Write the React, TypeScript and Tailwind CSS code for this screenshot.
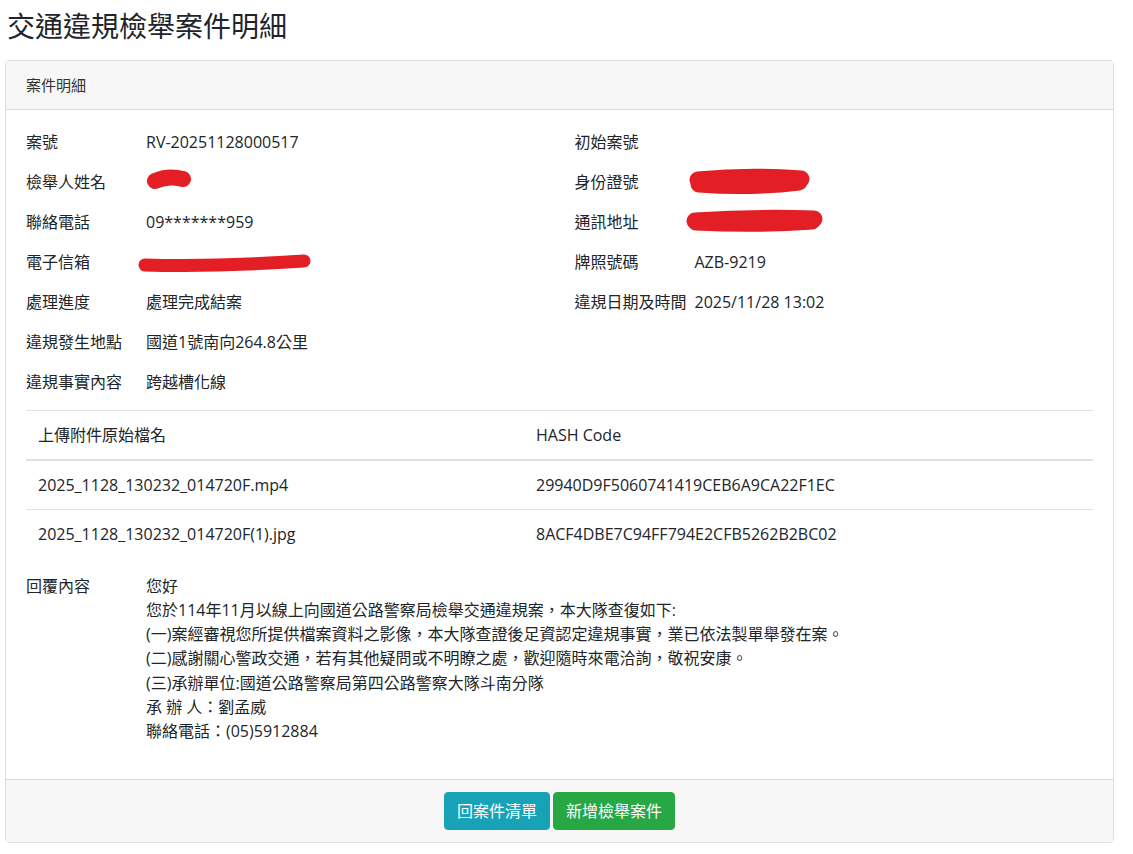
import React from 'react';

type Field = { label: string; value?: React.ReactNode };

const font = { fontFamily: '"Open Sans", "Noto Sans CJK TC", sans-serif' };

function Redact({ w, h, d, sw, className = '' }: { w: number; h: number; d: string; sw: number; className?: string }) {
  return (
    <svg width={w} height={h} viewBox={`0 0 ${w} ${h}`} className={`block ${className}`}>
      <path d={d} fill="none" stroke="#e31e24" strokeWidth={sw} strokeLinecap="round" strokeLinejoin="round" />
    </svg>
  );
}

const leftFields: Field[] = [
  { label: '案號', value: 'RV-20251128000517' },
  {
    label: '檢舉人姓名',
    value: <Redact w={46} h={22} sw={16} d="M9 12 Q22 6 37 10" className="-mt-[3px]" />,
  },
  { label: '聯絡電話', value: '09*******959' },
  {
    label: '電子信箱',
    value: <Redact w={174} h={20} sw={13} d="M7 12 Q80 14 166 8" className="-ml-[8px] mt-[2px]" />,
  },
  { label: '處理進度', value: '處理完成結案' },
  { label: '違規發生地點', value: '國道1號南向264.8公里' },
  { label: '違規事實內容', value: '跨越槽化線' },
];

const rightFields: Field[] = [
  { label: '初始案號' },
  {
    label: '身份證號',
    value: <Redact w={122} h={28} sw={17} d="M9 13 Q60 8 112 12 M10 17 Q60 21 110 15" className="-ml-[6px] -mt-[2px]" />,
  },
  {
    label: '通訊地址',
    value: <Redact w={138} h={24} sw={17} d="M9 13 Q70 9 128 11 M10 14 Q70 17 126 13" className="-ml-[9px] -mt-[4px]" />,
  },
  { label: '牌照號碼', value: 'AZB-9219' },
  { label: '違規日期及時間', value: '2025/11/28 13:02' },
];

const files = [
  { name: '2025_1128_130232_014720F.mp4', hash: '29940D9F5060741419CEB6A9CA22F1EC' },
  { name: '2025_1128_130232_014720F(1).jpg', hash: '8ACF4DBE7C94FF794E2CFB5262B2BC02' },
];

const reply = [
  '您好',
  '您於114年11月以線上向國道公路警察局檢舉交通違規案，本大隊查復如下:',
  '(一)案經審視您所提供檔案資料之影像，本大隊查證後足資認定違規事實，業已依法製單舉發在案。',
  '(二)感謝關心警政交通，若有其他疑問或不明瞭之處，歡迎隨時來電洽詢，敬祝安康。',
  '(三)承辦單位:國道公路警察局第四公路警察大隊斗南分隊',
  '承 辦 人：劉孟威',
  '聯絡電話：(05)5912884',
];

function FieldRow({ f }: { f: Field }) {
  return (
    <div className="flex items-center h-6 mb-4">
      <div className="w-[120px] shrink-0">{f.label}</div>
      <div>{f.value}</div>
    </div>
  );
}

export default function App() {
  return (
    <div className="min-h-screen bg-white text-[#212529] text-base leading-6 pl-[5px] pr-[19px]" style={font}>
      <h3 className="text-[28px] leading-[1.2] pt-[10px] mb-4 pl-[2px] font-normal">交通違規檢舉案件明細</h3>

      <div className="border border-black/[.125] rounded">
        {/* Header */}
        <div className="bg-[#f7f7f7] border-b border-black/[.125] px-5 py-3 text-[15px] text-[#333]">案件明細</div>

        {/* Body */}
        <div className="px-5 pt-5 pb-[19px]">
          <div className="grid grid-cols-2 gap-x-[30px]">
            <div>
              {leftFields.map((f) => (
                <FieldRow key={f.label} f={f} />
              ))}
            </div>
            <div>
              {rightFields.map((f) => (
                <FieldRow key={f.label} f={f} />
              ))}
            </div>
          </div>

          <table className="w-full mb-4 border-collapse">
            <thead>
              <tr>
                <th className="w-[498px] text-left font-normal px-3 py-3 border-t border-b-2 border-[#dee2e6]">上傳附件原始檔名</th>
                <th className="text-left font-normal px-3 py-3 border-t border-b-2 border-[#dee2e6]">HASH Code</th>
              </tr>
            </thead>
            <tbody>
              {files.map((r, i) => (
                <tr key={r.hash}>
                  <td className={`px-3 py-3 ${i > 0 ? 'border-t border-[#dee2e6]' : ''}`}>{r.name}</td>
                  <td className={`px-3 py-3 ${i > 0 ? 'border-t border-[#dee2e6]' : ''}`}>{r.hash}</td>
                </tr>
              ))}
            </tbody>
          </table>

          <div className="flex mb-4">
            <div className="w-[120px] shrink-0 leading-6">回覆內容</div>
            <div className="leading-[24.3px]">
              {reply.map((l) => (
                <div key={l}>{l}</div>
              ))}
            </div>
          </div>
        </div>

        {/* Footer */}
        <div className="bg-[#f7f7f7] border-t border-black/[.125] px-5 py-3 flex justify-center gap-[3px]">
          <button className="bg-[#17a2b8] text-white px-3 py-[6px] rounded leading-6 border border-[#17a2b8]">回案件清單</button>
          <button className="bg-[#28a745] text-white px-3 py-[6px] rounded leading-6 border border-[#28a745]">新增檢舉案件</button>
        </div>
      </div>
    </div>
  );
}
